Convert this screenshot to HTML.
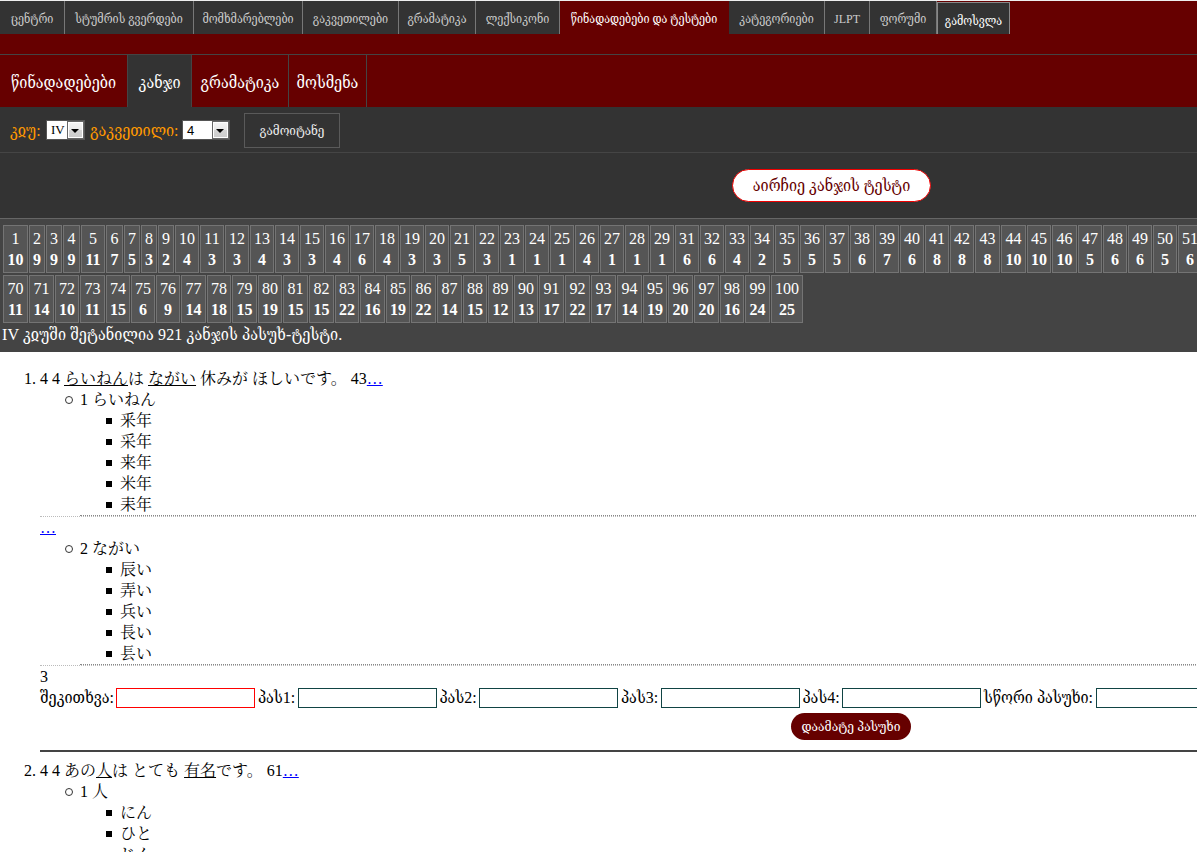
<!DOCTYPE html>
<html lang="ka">
<head>
<meta charset="utf-8">
<title>კანჯი</title>
<style>
html{overflow:hidden;background:#fff}
body{margin:0;width:1662px;font-family:"Liberation Serif","DejaVu Serif Condensed","Noto Serif CJK SC","Noto Sans CJK JP",serif;font-size:16px;line-height:21px;color:#000;background:#fff}
a{text-decoration:none}
#top{background:#600;height:54px;border-top:1px solid #eee;border-bottom:1px solid #444;box-sizing:border-box;width:1662px;height:55px;overflow:hidden}
#top ul{list-style:none;margin:0;padding:0;height:33px}
#top li{float:left;box-sizing:border-box;height:33px;line-height:37px;background:#333;border-right:1px solid #777;text-align:center;font-size:12px;color:#ccc;white-space:nowrap}
#top li.act{background:#600;color:#fff;border-right-color:#600}
#top li.out{color:#fff;border:1px solid #888;border-bottom:0;line-height:37px;margin-top:1px;height:32px}
#sub{background:#600;height:52px;width:1662px;overflow:hidden}
#sub ul{list-style:none;margin:0;padding:0}
#sub li{float:left;box-sizing:border-box;height:52px;line-height:56px;border-right:1px solid #444;color:#fff;font-size:16px;text-align:center;white-space:nowrap}
#sub li.act{background:#333}
#flt{background:#333;height:45px;border-bottom:1px solid #454545;position:relative;color:#f90;font-size:16px}
#flt .lb{position:absolute;top:13px;line-height:21px;white-space:nowrap}
.sel{position:absolute;top:13px;height:20px;box-sizing:border-box;background:#fff;border:1px solid #555;color:#000;font-size:13px;line-height:18px;padding-left:4px;font-family:"Liberation Serif",serif}
.sel.sans{font-family:"Liberation Sans",sans-serif;line-height:20px}
.sel i{position:absolute;right:0;top:0;bottom:0;width:17px;background:#666}
.sel i:before{content:"";position:absolute;left:1px;top:1px;width:15px;height:16px;box-sizing:border-box;border:1px solid #fff;background:linear-gradient(#f4f4f4,#eaeaea 48%,#d4d4d4 52%,#cdcdcd)}
.sel i:after{content:"";position:absolute;left:4px;top:8px;border:4px solid transparent;border-top:4px solid #000;border-bottom:0}
#go{position:absolute;left:244px;top:6px;width:96px;height:35px;box-sizing:border-box;border:1px solid #5a5a5a;color:#eee;font-size:13px;line-height:33px;text-align:center}
#pick{background:#333;height:65px;border-bottom:1px solid #666;position:relative}
#pick a{position:absolute;left:732px;top:16px;width:199px;height:33px;box-sizing:border-box;border:1px solid #e00;border-radius:17px;background:#fff;color:#600;font-size:16px;line-height:31px;text-align:center}
#grid{background:#444;height:133px;position:relative;color:#fff;width:1662px}
.c{position:absolute;height:48px;box-sizing:border-box;border:1px solid #747474;background:#555;color:#fff;text-align:center;line-height:21px;padding-top:2px;font-size:16px;white-space:nowrap}
#grid p{position:absolute;left:2px;top:105px;margin:0;line-height:21px;white-space:nowrap;letter-spacing:.1px}
ol{margin:16px 0 0 0;padding:0 0 0 40px}
ul{margin:0;padding:0 0 0 40px}
ol>li>ul{list-style:none;border-bottom:1px dotted #bbb}
ol>li>ul>li,ol>li>div>ul>li{border-bottom:1px dotted #888;position:relative}
ol>li ul ul{list-style:none;border:0}
ol>li ul>li:before{content:"";position:absolute;left:-15px;top:7px;width:8px;height:8px;box-sizing:border-box;border:1px solid #333;border-radius:50%}
ol>li ul ul>li{position:relative}
ol>li ul ul>li:before{left:-14px;top:8px;width:6px;height:6px;border:0;border-radius:0;background:#000}
.u{text-decoration:underline}
.more{color:#00f;text-decoration:underline}
.blk>ul{list-style:none;border-bottom:1px dotted #bbb}
.frm{white-space:nowrap;height:21px}
.frm span{display:inline-block;vertical-align:top;line-height:21px}
.frm input{display:inline-block;vertical-align:top;box-sizing:border-box;width:139px;height:20px;border:1px solid #144;margin:1px 0 0 0;padding:0;background:#fff}
.frm input.q{border-color:#f00}
.add{display:block;width:120px;height:27px;margin:5px auto 0;border-radius:14px;background:#600;color:#fff;font-size:13.4px;line-height:27px;text-align:center}
hr{border:0;border-top:2px solid #444;margin:10px 0 8px;height:0}
</style>
</head>
<body>
<div id="top"><ul>
<li style="width:65px">ცენტრი</li>
<li style="width:129px">სტუმრის გვერდები</li>
<li style="width:109px">მომხმარებლები</li>
<li style="width:96px">გაკვეთილები</li>
<li style="width:77px">გრამატიკა</li>
<li style="width:84px">ლექსიკონი</li>
<li class="act" style="width:169px">წინადადებები და ტესტები</li>
<li style="width:96px">კატეგორიები</li>
<li style="width:45px">JLPT</li>
<li style="width:67px">ფორუმი</li>
<li class="out" style="width:73px">გამოსვლა</li>
</ul></div>
<div id="sub"><ul>
<li style="width:128px">წინადადებები</li>
<li class="act" style="width:64px">კანჯი</li>
<li style="width:97px">გრამატიკა</li>
<li style="width:78px">მოსმენა</li>
</ul></div>
<div id="flt">
<span class="lb" style="left:10px">კჲუ:</span>
<span class="sel" style="left:46px;width:39px">IV<i></i></span>
<span class="lb" style="left:90px">გაკვეთილი:</span>
<span class="sel sans" style="left:182px;width:48px">4<i></i></span>
<a id="go">გამოიტანე</a>
</div>
<div id="pick"><a>აირჩიე კანჯის ტესტი</a></div>
<div id="grid">
<a class="c" style="left:3px;top:6px;width:25px">1<br><b>10</b></a>
<a class="c" style="left:29px;top:6px;width:16px">2<br><b>9</b></a>
<a class="c" style="left:46px;top:6px;width:16px">3<br><b>9</b></a>
<a class="c" style="left:63px;top:6px;width:17px">4<br><b>9</b></a>
<a class="c" style="left:81px;top:6px;width:24px">5<br><b>11</b></a>
<a class="c" style="left:106px;top:6px;width:17px">6<br><b>7</b></a>
<a class="c" style="left:124px;top:6px;width:16px">7<br><b>5</b></a>
<a class="c" style="left:141px;top:6px;width:16px">8<br><b>3</b></a>
<a class="c" style="left:158px;top:6px;width:16px">9<br><b>2</b></a>
<a class="c" style="left:175px;top:6px;width:24px">10<br><b>4</b></a>
<a class="c" style="left:200px;top:6px;width:24px">11<br><b>3</b></a>
<a class="c" style="left:225px;top:6px;width:24px">12<br><b>3</b></a>
<a class="c" style="left:250px;top:6px;width:24px">13<br><b>4</b></a>
<a class="c" style="left:275px;top:6px;width:24px">14<br><b>3</b></a>
<a class="c" style="left:300px;top:6px;width:24px">15<br><b>3</b></a>
<a class="c" style="left:325px;top:6px;width:24px">16<br><b>4</b></a>
<a class="c" style="left:350px;top:6px;width:24px">17<br><b>6</b></a>
<a class="c" style="left:375px;top:6px;width:24px">18<br><b>4</b></a>
<a class="c" style="left:400px;top:6px;width:24px">19<br><b>3</b></a>
<a class="c" style="left:425px;top:6px;width:24px">20<br><b>3</b></a>
<a class="c" style="left:450px;top:6px;width:24px">21<br><b>5</b></a>
<a class="c" style="left:475px;top:6px;width:24px">22<br><b>3</b></a>
<a class="c" style="left:500px;top:6px;width:24px">23<br><b>1</b></a>
<a class="c" style="left:525px;top:6px;width:24px">24<br><b>1</b></a>
<a class="c" style="left:550px;top:6px;width:24px">25<br><b>1</b></a>
<a class="c" style="left:575px;top:6px;width:24px">26<br><b>4</b></a>
<a class="c" style="left:600px;top:6px;width:24px">27<br><b>1</b></a>
<a class="c" style="left:625px;top:6px;width:24px">28<br><b>1</b></a>
<a class="c" style="left:650px;top:6px;width:24px">29<br><b>1</b></a>
<a class="c" style="left:675px;top:6px;width:24px">31<br><b>6</b></a>
<a class="c" style="left:700px;top:6px;width:24px">32<br><b>6</b></a>
<a class="c" style="left:725px;top:6px;width:24px">33<br><b>4</b></a>
<a class="c" style="left:750px;top:6px;width:24px">34<br><b>2</b></a>
<a class="c" style="left:775px;top:6px;width:24px">35<br><b>5</b></a>
<a class="c" style="left:800px;top:6px;width:24px">36<br><b>5</b></a>
<a class="c" style="left:825px;top:6px;width:24px">37<br><b>5</b></a>
<a class="c" style="left:850px;top:6px;width:24px">38<br><b>6</b></a>
<a class="c" style="left:875px;top:6px;width:24px">39<br><b>7</b></a>
<a class="c" style="left:900px;top:6px;width:24px">40<br><b>6</b></a>
<a class="c" style="left:925px;top:6px;width:24px">41<br><b>8</b></a>
<a class="c" style="left:950px;top:6px;width:24px">42<br><b>8</b></a>
<a class="c" style="left:975px;top:6px;width:25px">43<br><b>8</b></a>
<a class="c" style="left:1001px;top:6px;width:25px">44<br><b>10</b></a>
<a class="c" style="left:1027px;top:6px;width:24px">45<br><b>10</b></a>
<a class="c" style="left:1052px;top:6px;width:25px">46<br><b>10</b></a>
<a class="c" style="left:1078px;top:6px;width:24px">47<br><b>5</b></a>
<a class="c" style="left:1103px;top:6px;width:24px">48<br><b>6</b></a>
<a class="c" style="left:1128px;top:6px;width:24px">49<br><b>6</b></a>
<a class="c" style="left:1153px;top:6px;width:24px">50<br><b>5</b></a>
<a class="c" style="left:1178px;top:6px;width:24px">51<br><b>6</b></a>
<a class="c" style="left:1203px;top:6px;width:24px">52<br><b>7</b></a>
<a class="c" style="left:1228px;top:6px;width:24px">53<br><b>7</b></a>
<a class="c" style="left:1253px;top:6px;width:24px">54<br><b>7</b></a>
<a class="c" style="left:1278px;top:6px;width:24px">55<br><b>7</b></a>
<a class="c" style="left:1303px;top:6px;width:24px">56<br><b>7</b></a>
<a class="c" style="left:1328px;top:6px;width:24px">57<br><b>7</b></a>
<a class="c" style="left:1353px;top:6px;width:24px">58<br><b>7</b></a>
<a class="c" style="left:1378px;top:6px;width:24px">59<br><b>7</b></a>
<a class="c" style="left:1403px;top:6px;width:24px">60<br><b>7</b></a>
<a class="c" style="left:1428px;top:6px;width:24px">61<br><b>7</b></a>
<a class="c" style="left:1453px;top:6px;width:24px">62<br><b>7</b></a>
<a class="c" style="left:1478px;top:6px;width:24px">63<br><b>7</b></a>
<a class="c" style="left:1503px;top:6px;width:24px">64<br><b>7</b></a>
<a class="c" style="left:1528px;top:6px;width:24px">65<br><b>7</b></a>
<a class="c" style="left:1553px;top:6px;width:24px">66<br><b>7</b></a>
<a class="c" style="left:1578px;top:6px;width:24px">67<br><b>7</b></a>
<a class="c" style="left:1603px;top:6px;width:24px">68<br><b>7</b></a>
<a class="c" style="left:1628px;top:6px;width:24px">69<br><b>7</b></a>
<a class="c" style="left:3px;top:56px;width:25px">70<br><b>11</b></a>
<a class="c" style="left:29px;top:56px;width:25px">71<br><b>14</b></a>
<a class="c" style="left:55px;top:56px;width:24px">72<br><b>10</b></a>
<a class="c" style="left:80px;top:56px;width:25px">73<br><b>11</b></a>
<a class="c" style="left:106px;top:56px;width:24px">74<br><b>15</b></a>
<a class="c" style="left:131px;top:56px;width:24px">75<br><b>6</b></a>
<a class="c" style="left:156px;top:56px;width:24px">76<br><b>9</b></a>
<a class="c" style="left:181px;top:56px;width:25px">77<br><b>14</b></a>
<a class="c" style="left:207px;top:56px;width:24px">78<br><b>18</b></a>
<a class="c" style="left:232px;top:56px;width:25px">79<br><b>15</b></a>
<a class="c" style="left:258px;top:56px;width:24px">80<br><b>19</b></a>
<a class="c" style="left:283px;top:56px;width:25px">81<br><b>15</b></a>
<a class="c" style="left:309px;top:56px;width:25px">82<br><b>15</b></a>
<a class="c" style="left:335px;top:56px;width:24px">83<br><b>22</b></a>
<a class="c" style="left:360px;top:56px;width:25px">84<br><b>16</b></a>
<a class="c" style="left:386px;top:56px;width:24px">85<br><b>19</b></a>
<a class="c" style="left:411px;top:56px;width:25px">86<br><b>22</b></a>
<a class="c" style="left:437px;top:56px;width:25px">87<br><b>14</b></a>
<a class="c" style="left:463px;top:56px;width:24px">88<br><b>15</b></a>
<a class="c" style="left:488px;top:56px;width:25px">89<br><b>12</b></a>
<a class="c" style="left:514px;top:56px;width:24px">90<br><b>13</b></a>
<a class="c" style="left:539px;top:56px;width:25px">91<br><b>17</b></a>
<a class="c" style="left:565px;top:56px;width:25px">92<br><b>22</b></a>
<a class="c" style="left:591px;top:56px;width:25px">93<br><b>17</b></a>
<a class="c" style="left:617px;top:56px;width:25px">94<br><b>14</b></a>
<a class="c" style="left:643px;top:56px;width:24px">95<br><b>19</b></a>
<a class="c" style="left:668px;top:56px;width:25px">96<br><b>20</b></a>
<a class="c" style="left:694px;top:56px;width:25px">97<br><b>20</b></a>
<a class="c" style="left:720px;top:56px;width:24px">98<br><b>16</b></a>
<a class="c" style="left:745px;top:56px;width:25px">99<br><b>24</b></a>
<a class="c" style="left:771px;top:56px;width:32px">100<br><b>25</b></a>
<p>IV კჲუში შეტანილია 921 კანჯის პასუხ-ტესტი.</p>
</div>
<ol>
<li>4 4 <span class="u">らいねん</span>は <span class="u">ながい</span> 休みが ほしいです。 43<a class="more">…</a>
<ul><li>1 らいねん
<ul><li>釆年</li><li>采年</li><li>来年</li><li>米年</li><li>耒年</li></ul></li></ul>
<div class="blk"><a class="more">…</a>
<ul><li>2 ながい
<ul><li>辰い</li><li>弄い</li><li>兵い</li><li>長い</li><li>镸い</li></ul></li></ul></div>
<div>3</div>
<div class="frm"><span style="width:76px">შეკითხვა:</span><input class="q"><span style="width:43px;text-align:center">პას1:</span><input><span style="width:42px;text-align:center">პას2:</span><input><span style="width:43px;text-align:center">პას3:</span><input><span style="width:42px;text-align:center">პას4:</span><input><span style="width:115px;text-align:center">სწორი პასუხი:</span><input></div>
<a class="add">დაამატე პასუხი</a>
<hr>
</li>
<li>4 4 あの<span class="u">人</span>は とても <span class="u">有名</span>です。 61<a class="more">…</a>
<ul><li>1 人
<ul><li>にん</li><li>ひと</li><li>じん</li><li>たり</li><li>と</li></ul></li></ul>
</li>
</ol>
</body>
</html>
